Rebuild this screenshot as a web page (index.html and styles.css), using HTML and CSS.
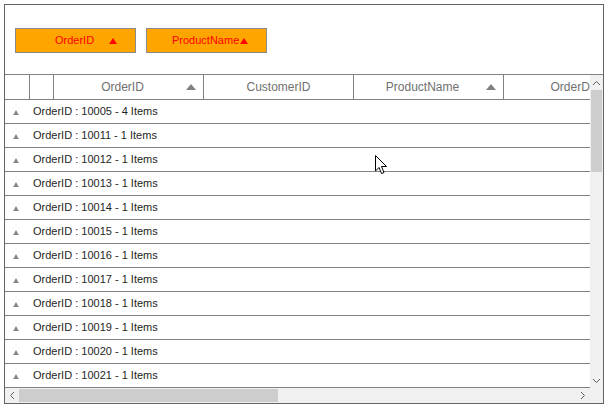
FILE: index.html
```html
<!DOCTYPE html>
<html>
<head>
<meta charset="utf-8">
<link rel="stylesheet" href="styles.css">
</head>
<body>
<div class="grid">
  <div class="group-area">
    <div class="group-btn"><span class="gb-label">OrderID</span><span class="gb-tri"></span></div>
    <div class="group-btn gb-tight"><span class="gb-label">ProductName</span><span class="gb-tri"></span></div>
  </div>
  <div class="main">
    <div class="viewport">
      <div class="header">
        <div class="hcell indent"></div>
        <div class="hcell indent2"></div>
        <div class="hcell col sorted">OrderID<span class="sort-tri"></span></div>
        <div class="hcell col">CustomerID</div>
        <div class="hcell col sorted">ProductName<span class="sort-tri"></span></div>
        <div class="hcell col">OrderDate</div>
      </div>
      <div class="rows">
        <div class="row"><span class="exp"></span><span class="rtext">OrderID : 10005 - 4 Items</span></div>
        <div class="row"><span class="exp"></span><span class="rtext">OrderID : 10011 - 1 Items</span></div>
        <div class="row"><span class="exp"></span><span class="rtext">OrderID : 10012 - 1 Items</span></div>
        <div class="row"><span class="exp"></span><span class="rtext">OrderID : 10013 - 1 Items</span></div>
        <div class="row"><span class="exp"></span><span class="rtext">OrderID : 10014 - 1 Items</span></div>
        <div class="row"><span class="exp"></span><span class="rtext">OrderID : 10015 - 1 Items</span></div>
        <div class="row"><span class="exp"></span><span class="rtext">OrderID : 10016 - 1 Items</span></div>
        <div class="row"><span class="exp"></span><span class="rtext">OrderID : 10017 - 1 Items</span></div>
        <div class="row"><span class="exp"></span><span class="rtext">OrderID : 10018 - 1 Items</span></div>
        <div class="row"><span class="exp"></span><span class="rtext">OrderID : 10019 - 1 Items</span></div>
        <div class="row"><span class="exp"></span><span class="rtext">OrderID : 10020 - 1 Items</span></div>
        <div class="row"><span class="exp"></span><span class="rtext">OrderID : 10021 - 1 Items</span></div>
      </div>
    </div>
    <div class="vscroll">
      <div class="sb-btn"><svg width="9" height="6" viewBox="0 0 9 6"><path d="M1 5 L4.5 1.5 L8 5" fill="none" stroke="#606060" stroke-width="1"/></svg></div>
      <div class="vtrack"><div class="vthumb"></div></div>
      <div class="sb-btn"><svg width="9" height="6" viewBox="0 0 9 6"><path d="M1 1 L4.5 4.5 L8 1" fill="none" stroke="#606060" stroke-width="1"/></svg></div>
    </div>
  </div>
  <div class="hbar">
    <div class="hscroll">
      <div class="sb-hbtn"><svg width="6" height="9" viewBox="0 0 6 9"><path d="M5 1 L1.5 4.5 L5 8" fill="none" stroke="#606060" stroke-width="1"/></svg></div>
      <div class="htrack"><div class="hthumb"></div></div>
      <div class="sb-hbtn"><svg width="6" height="9" viewBox="0 0 6 9"><path d="M1 1 L4.5 4.5 L1 8" fill="none" stroke="#606060" stroke-width="1"/></svg></div>
    </div>
    <div class="corner"></div>
  </div>
  <svg class="cursor" width="13" height="20" viewBox="0 0 13 20"><path d="M0.5 0.5 L0.5 16 L4 12.5 L6.5 18.5 L9 17.5 L6.5 11.5 L11.5 11.5 Z" fill="#fff" stroke="#000" stroke-width="1"/></svg>
</div>
</body>
</html>
```
FILE: styles.css
```css
* { box-sizing: border-box; }
body {
  margin: 0;
  background: #fff;
  font-family: "Liberation Sans", Arial, sans-serif;
  font-size: 11px;
}
.grid {
  position: relative;
  margin: 4px;
  width: 600px;
  height: 400px;
  border: 1px solid #646464;
  display: flex;
  flex-direction: column;
  background: #fff;
}
.group-area {
  height: 69px;
  display: flex;
  align-items: flex-start;
  gap: 10px;
  padding: 23px 0 0 10px;
}
.group-btn {
  width: 121px;
  height: 25px;
  background: #ffa500;
  border: 1px solid #8a8a8a;
  color: #ff0000;
  display: flex;
  align-items: center;
  padding-left: 39px;
}
.gb-tight { padding-left: 25px; }
.gb-label { line-height: 1; }
.gb-tri {
  width: 0; height: 0;
  border-left: 4.5px solid transparent;
  border-right: 4.5px solid transparent;
  border-bottom: 6px solid #ff0000;
  margin-left: 15px;
}
.gb-tight .gb-tri { margin-left: 1px; }
.main {
  flex: 1;
  display: flex;
  min-height: 0;
  border-top: 1px solid #828282;
}
.viewport {
  flex: 1;
  overflow: hidden;
  min-width: 0;
}
.header {
  display: flex;
  height: 25px;
  border-bottom: 1px solid #828282;
  color: #707070;
  font-size: 12px;
}
.hcell {
  flex: none;
  height: 24px;
  border-right: 1px solid #828282;
  display: flex;
  align-items: center;
  justify-content: center;
  position: relative;
}
.indent { width: 25px; }
.indent2 { width: 24px; }
.col { width: 150px; }
.sorted { padding-right: 12px; }
.sort-tri {
  position: absolute;
  right: 7px;
  top: 9px;
  width: 0; height: 0;
  border-left: 5px solid transparent;
  border-right: 5px solid transparent;
  border-bottom: 6px solid #808080;
}
.row {
  height: 24px;
  border-bottom: 1px solid #828282;
  display: flex;
  align-items: center;
  padding-bottom: 1px;
  color: #1e1e1e;
  font-size: 11px;
}
.exp {
  width: 0; height: 0;
  margin-left: 8px;
  margin-right: 14px;
  border-left: 3.5px solid transparent;
  border-right: 3.5px solid transparent;
  border-bottom: 5px solid #8a8a8a;
  margin-top: 3px;
}
.vscroll {
  width: 13px;
  background: #f0f0f0;
  display: flex;
  flex-direction: column;
}
.sb-btn {
  height: 15px;
  display: flex;
  align-items: center;
  justify-content: center;
}
.vtrack { flex: 1; padding: 0 1px; }
.vthumb {
  margin-top: 0;
  height: 82px;
  background: #cdcdcd;
}
.hbar {
  height: 15px;
  display: flex;
  background: #f0f0f0;
}
.hscroll {
  flex: 1;
  display: flex;
}
.sb-hbtn {
  width: 14px;
  display: flex;
  align-items: center;
  justify-content: center;
}
.htrack { flex: 1; padding: 1px 0; }
.hthumb {
  width: 259px;
  height: 100%;
  background: #cdcdcd;
}
.corner { width: 13px; background: #f0f0f0; }
.cursor {
  position: absolute;
  left: 370px;
  top: 150px;
}
```
